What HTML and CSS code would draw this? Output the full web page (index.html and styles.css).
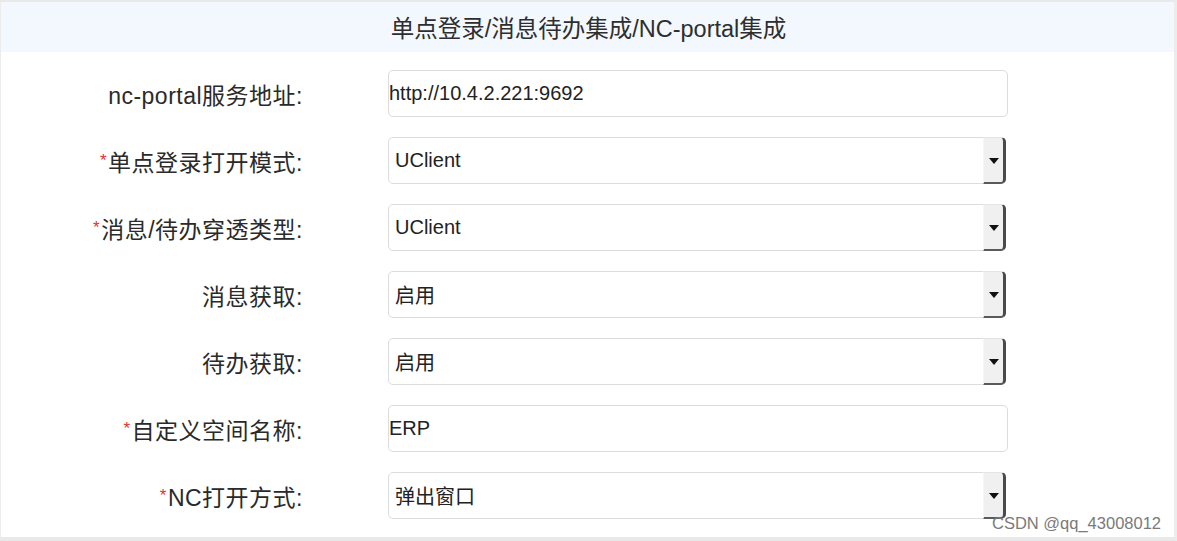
FILE: index.html
```html
<!DOCTYPE html>
<html lang="zh-CN">
<head>
<meta charset="utf-8">
<title>NC-portal集成</title>
<link rel="stylesheet" href="styles.css">
</head>
<body>
<div class="frame">
  <div class="header">单点登录/消息待办集成/NC-portal集成</div>
  <div class="form">
    <div class="row">
      <div class="label">nc-portal服务地址:</div>
      <div class="field text">http://10.4.2.221:9692</div>
    </div>
    <div class="row">
      <div class="label"><span class="req">*</span>单点登录打开模式:</div>
      <div class="field select"><span class="value">UClient</span><span class="btn"><span class="tri"></span></span></div>
    </div>
    <div class="row">
      <div class="label"><span class="req">*</span>消息/待办穿透类型:</div>
      <div class="field select"><span class="value">UClient</span><span class="btn"><span class="tri"></span></span></div>
    </div>
    <div class="row">
      <div class="label">消息获取:</div>
      <div class="field select"><span class="value">启用</span><span class="btn"><span class="tri"></span></span></div>
    </div>
    <div class="row">
      <div class="label">待办获取:</div>
      <div class="field select"><span class="value">启用</span><span class="btn"><span class="tri"></span></span></div>
    </div>
    <div class="row">
      <div class="label"><span class="req">*</span>自定义空间名称:</div>
      <div class="field text">ERP</div>
    </div>
    <div class="row">
      <div class="label"><span class="req">*</span>NC打开方式:</div>
      <div class="field select"><span class="value">弹出窗口</span><span class="btn"><span class="tri"></span></span></div>
    </div>
  </div>
  <div class="watermark">CSDN @qq_43008012</div>
</div>
</body>
</html>
```
FILE: styles.css
```css
* { box-sizing: border-box; }
html, body { margin: 0; padding: 0; background: #fff; }
body {
  font-family: "Liberation Sans", "Noto Sans CJK SC", sans-serif;
  color: #333;
}
.frame {
  position: relative;
  width: 1177px;
  height: 541px;
  border-top: 2px solid #e9e9e9;
  border-left: 1px solid #ececec;
  border-right: 3px solid #ececec;
  border-bottom: 4px solid #e9e9e9;
  overflow: hidden;
}
.header {
  height: 50px;
  background: #f3f8fe;
  display: flex;
  align-items: center;
  justify-content: center;
  font-size: 23.5px;
  color: #2e2e2e;
  padding-left: 2px;
  padding-bottom: 1px;
}
.form {
  display: flex;
  flex-direction: column;
  gap: 20px;
  padding-top: 18px;
}
.row {
  display: grid;
  grid-template-columns: 302px 85px 620px;
  height: 47px;
  align-items: center;
}
.label {
  grid-column: 1;
  text-align: right;
  font-size: 23px;
  letter-spacing: 0.5px;
  color: #2a2a2a;
  white-space: nowrap;
}
.req {
  color: #e8302a;
  font-size: 17px;
  vertical-align: 5px;
  margin-right: 1px;
}
.field {
  grid-column: 3;
  height: 47px;
  border: 1px solid #dcdcdc;
  border-radius: 5px;
  font-size: 20px;
  color: #222;
  display: flex;
  align-items: center;
}
.text {
  padding-left: 0;
}
.select {
  padding-left: 6px;
  width: 618px;
}
.value { flex: 1; }
.btn {
  align-self: stretch;
  width: 23px;
  margin: -1px -1px -1px 0;
  background: #f0f0f0;
  border-left: 1px solid #f6f6f6;
  border-right: 3px solid #4a4a4a;
  border-bottom: 2px solid #5a5a5a;
  border-top: 1px solid #e4e4e4;
  border-radius: 0 5px 5px 0;
  display: flex;
  align-items: center;
  justify-content: center;
}
.tri {
  width: 0;
  height: 0;
  border-left: 5px solid transparent;
  border-right: 5px solid transparent;
  border-top: 6px solid #111;
  margin-top: 2px;
}
.watermark {
  position: absolute;
  left: 991px;
  top: 512px;
  font-size: 16.5px;
  color: #7a7a7a;
  white-space: nowrap;
  font-family: "Liberation Sans", sans-serif;
}
```
